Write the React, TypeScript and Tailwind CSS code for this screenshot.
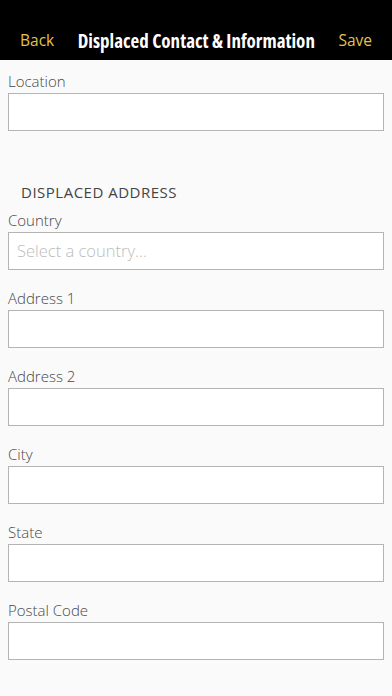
const fields = ["Country", "Address 1", "Address 2", "City", "State", "Postal Code"];

const Field = ({ label, placeholder }: { label: string; placeholder?: string }) => (
  <div className="flex flex-col">
    <label className="h-[24px] text-[15px] font-light leading-[24px] text-[#474747]">{label}</label>
    <div className="flex h-[38px] items-center border border-[#b4b4b4] bg-white px-[8px] text-[16.5px] font-light text-[#bcbcbc]">
      {placeholder}
    </div>
  </div>
);

export default function App() {
  return (
    <div
      className="flex min-h-[696px] w-[392px] flex-col bg-[#fafafa]"
      style={{ fontFamily: '"Open Sans", "Noto Sans", sans-serif' }}
    >
      <header className="flex h-[60px] items-center justify-between bg-black px-[20px] pt-[22px]">
        <button className="text-[15.5px] leading-none text-[#e3c24c]">Back</button>
        <h1 className="text-[19px] leading-none font-bold font-stretch-condensed text-white">
          Displaced Contact &amp; Information
        </h1>
        <button className="text-[15.5px] leading-none text-[#e3c24c]">Save</button>
      </header>

      <main className="flex flex-col px-[8px] pt-[9px]">
        <Field label="Location" />

        <h2 className="mt-[49px] px-[13px] text-[15px] leading-[24px] tracking-[0.5px] text-[#444]">
          DISPLACED ADDRESS
        </h2>

        <div className="mt-[4px] flex flex-col gap-[16px]">
          {fields.map((f) => (
            <Field key={f} label={f} placeholder={f === "Country" ? "Select a country..." : undefined} />
          ))}
        </div>
      </main>
    </div>
  );
}
